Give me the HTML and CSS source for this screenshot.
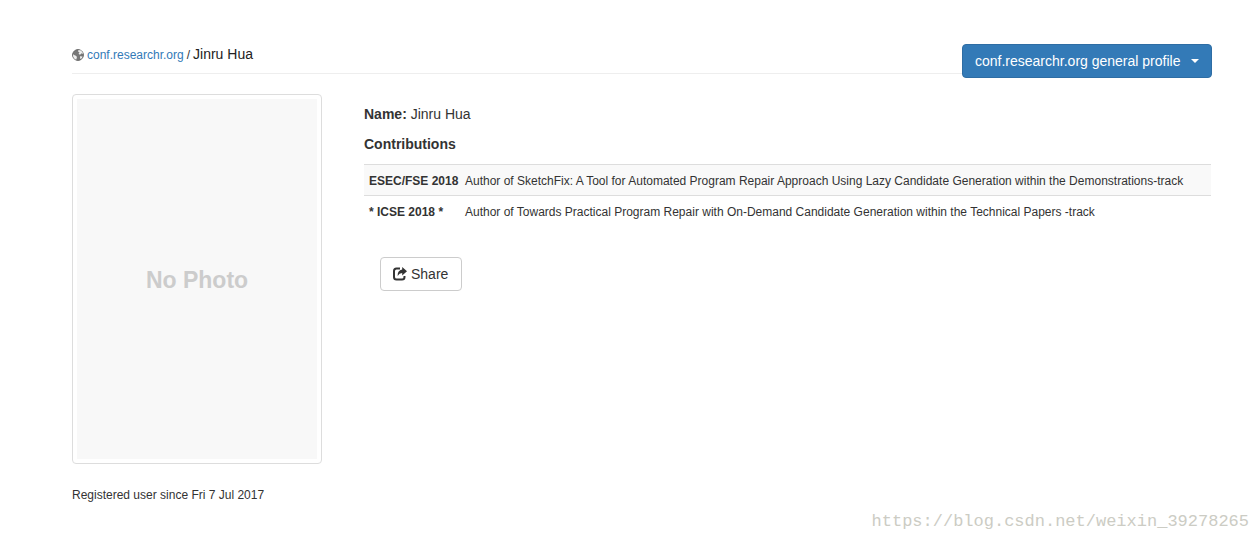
FILE: index.html
```html
<!DOCTYPE html>
<html lang="en">
<head>
<meta charset="utf-8">
<meta name="viewport" content="width=device-width, initial-scale=1">
<title>Jinru Hua - conf.researchr.org</title>
<link rel="stylesheet" href="styles.css">
</head>
<body>
<div class="page">
  <header class="topbar">
    <nav class="breadcrumb" aria-label="Breadcrumb">
      <svg class="globe" viewBox="0 0 12 12" aria-hidden="true">
        <circle cx="6" cy="6" r="5.4" fill="#777" stroke="#666" stroke-width="1"/>
        <path fill="#eee" d="M6.4 1 9 1.6 10.8 3.8 10.9 5 9.6 4.3 8.4 5.4 7.2 5.6 6.6 4.5 7.6 3.4 6.2 2.7zM1.1 5.2 2.6 6.2 4.4 7 4.9 8.4 4.2 10.8 2.2 9.4 1.1 7.4zM8 7.2 10.6 7.4 9.7 9.2 8.2 10z"/>
      </svg>
      <a class="site-link" href="#">conf.researchr.org</a>
      <span class="separator">/</span>
      <span class="current">Jinru Hua</span>
    </nav>
    <button class="btn btn-primary" type="button">conf.researchr.org general profile <span class="caret"></span></button>
  </header>
  <main class="profile">
    <aside class="side">
      <div class="thumbnail"><div class="placeholder">No Photo</div></div>
      <p class="registered">Registered user since Fri 7 Jul 2017</p>
    </aside>
    <section class="details">
      <p class="line"><strong>Name:</strong> Jinru Hua</p>
      <h1 class="line heading">Contributions</h1>
      <table class="contributions">
        <tbody>
          <tr><th scope="row">ESEC/FSE 2018</th><td>Author of SketchFix: A Tool for Automated Program Repair Approach Using Lazy Candidate Generation within the Demonstrations-track</td></tr>
          <tr><th scope="row">* ICSE 2018 *</th><td>Author of Towards Practical Program Repair with On-Demand Candidate Generation within the Technical Papers -track</td></tr>
        </tbody>
      </table>
      <button class="btn btn-default" type="button">
        <svg class="share-icon" viewBox="0 0 14 14" aria-hidden="true">
          <path fill="none" stroke="#333" stroke-width="2" d="M7 1.500H3.500Q1 1.500 1 4V10Q1 12.500 3.500 12.500H9Q11.500 12.500 11.500 10V9"/>
          <path fill="#333" d="M9.200 0 14 4.300 9.200 8.600V6Q6.200 6 4.600 9 4.500 3.200 9.200 2.600z"/>
        </svg>
        Share
      </button>
    </section>
  </main>
  <footer class="watermark">https://blog.csdn.net/weixin_39278265</footer>
</div>
</body>
</html>
```
FILE: styles.css
```css
* { box-sizing: border-box; }
body {
  margin: 0;
  background: #fff;
  color: #333;
  font: 14px/20px "Liberation Sans", Arial, sans-serif;
}
.page { padding: 44px 47px 0 72px; }
.topbar {
  display: flex;
  justify-content: space-between;
  align-items: flex-start;
  border-bottom: 1px solid #eee;
  margin-bottom: 20px;
}
.breadcrumb { display: flex; align-items: baseline; gap: 3px; }
.globe { width: 12px; height: 12px; align-self: center; }
.site-link { color: #337ab7; font-size: 12px; text-decoration: none; }
.separator { font-size: 12px; }
.current { color: #222; }
.btn {
  border: 1px solid;
  border-radius: 4px;
  padding: 6px 12px;
  font: inherit;
  cursor: pointer;
}
.btn-primary {
  display: flex;
  align-items: center;
  justify-content: space-between;
  min-width: 250px;
  margin-bottom: -5px;
  background: #337ab7;
  border-color: #2e6da4;
  color: #fff;
}
.caret {
  border-top: 4px solid;
  border-left: 4px solid transparent;
  border-right: 4px solid transparent;
}
.profile { display: flex; gap: 42px; padding-right: 1px; }
.side { flex: 0 0 250px; }
.thumbnail {
  height: 370px;
  padding: 4px;
  border: 1px solid #ddd;
  border-radius: 4px;
}
.placeholder {
  display: grid;
  place-items: center;
  height: 100%;
  padding-top: 2px;
  background: #f8f8f8;
  color: #ccc;
  font-size: 23px;
  font-weight: bold;
}
.registered { margin: 21px 0 0; font-size: 12px; }
.details { flex: 1; padding-top: 10px; }
.line { margin: 0 0 10px; }
.heading { font-size: 14px; }
.contributions {
  width: 100%;
  border-collapse: collapse;
  font-size: 12px;
  margin-bottom: 31px;
}
.contributions th,
.contributions td {
  padding: 8px 5px 5px;
  border-top: 1px solid #ddd;
  text-align: left;
  line-height: 17px;
}
.contributions th { width: 96px; padding-right: 1px; white-space: nowrap; }
.contributions tr:first-child { background: #f9f9f9; }
.btn-default {
  display: flex;
  align-items: center;
  gap: 4px;
  min-width: 82px;
  margin-left: 16px;
  background: #fff;
  border-color: #ccc;
  color: #333;
}
.share-icon { width: 14px; height: 14px; }
.watermark {
  position: absolute;
  right: 10px;
  bottom: 10px;
  color: #ccccc4;
  font: 17px/20px "Liberation Mono", monospace;
}
```
